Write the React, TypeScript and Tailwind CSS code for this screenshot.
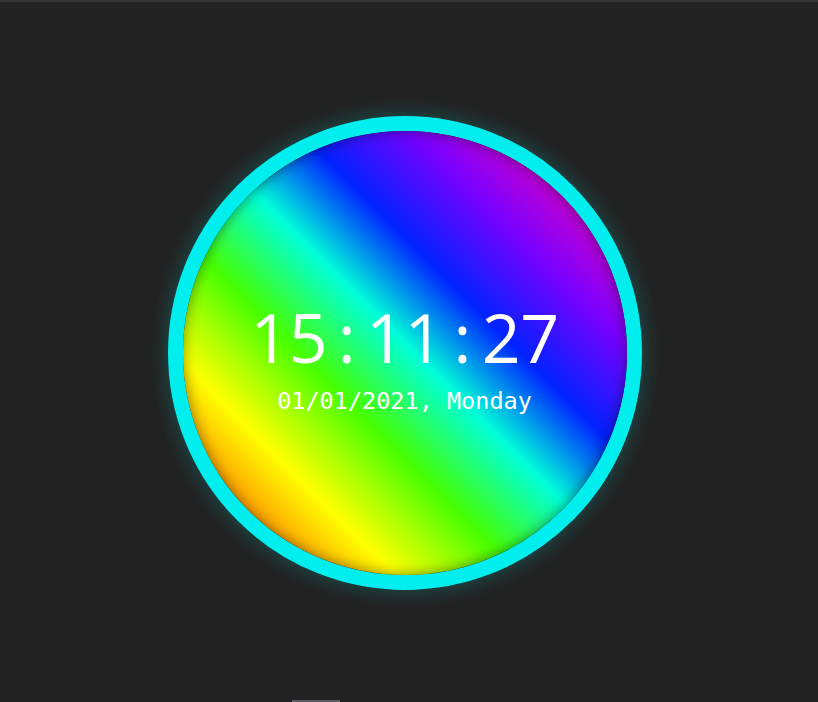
import React from 'react';

const time = '15:11:27';

const App: React.FC = () => {
  return (
    <div className="relative h-[702px] w-full overflow-hidden bg-[#222222] border-t-2 border-[#35353a]">
      <div className="flex h-full items-center justify-center pr-[9px] pt-[2px]">
        {/* Clock ring */}
        <div className="flex h-[474px] w-[474px] items-center justify-center rounded-full border-[15px] border-[#00eeee] shadow-[0_0_18px_4px_rgba(0,238,238,0.18)]">
          <div className="flex h-full w-full flex-col items-center justify-center rounded-full bg-[linear-gradient(45deg,#ff2a00_0%,#ff9a00_14%,#ffff00_24%,#48ff00_38%,#00ffd8_51%,#0022ff_63%,#7a00ff_76%,#cc00cc_87%,#ff0080_100%)] shadow-[inset_0_0_14px_rgba(0,0,0,0.45)] text-white">
            <div className="flex font-['Open_Sans',sans-serif] text-[68px] leading-none mt-[10px]">
              {time.split('').map((ch, i) => (
                <span key={i} className="inline-block w-[38.6px] text-center">
                  {ch}
                </span>
              ))}
            </div>
            <div className="font-['DejaVu_Sans_Mono',monospace] text-[23.5px] leading-none mt-[19px]">
              01/01/2021, Monday
            </div>
          </div>
        </div>
      </div>
      <div className="absolute bottom-0 left-[292px] h-[2px] w-[48px] bg-[#5a5a5e]" />
    </div>
  );
};

export default App;
